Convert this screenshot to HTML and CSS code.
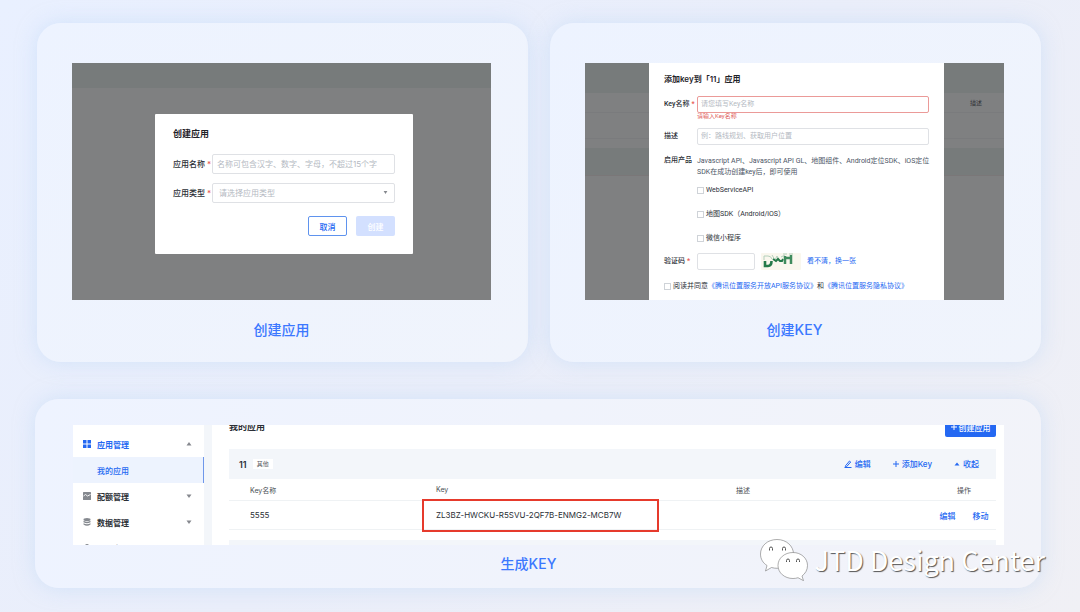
FILE: index.html
```html
<!DOCTYPE html>
<html lang="zh-CN">
<head>
<meta charset="utf-8">
<title>创建应用与 KEY</title>
<link rel="stylesheet" href="styles.css">
</head>
<body>
<main class="page">
  <div class="top-row">
    <section class="card">
      <div class="shot app-shot">
        <div class="topbar"></div>
        <form class="dialog">
          <h3 class="dialog-title">创建应用</h3>
          <div class="field-row">
            <label class="label" for="app-name">应用名称<span class="req">*</span></label>
            <input class="field" id="app-name" type="text" placeholder="名称可包含汉字、数字、字母，不超过15个字">
          </div>
          <div class="field-row">
            <label class="label" for="app-type">应用类型<span class="req">*</span></label>
            <div class="select-wrap">
              <select class="field select" id="app-type"><option>请选择应用类型</option></select>
              <svg class="select-arrow" viewBox="0 0 6 4"><path d="M0.5 0h5L3 4z"/></svg>
            </div>
          </div>
          <div class="dialog-actions">
            <button class="btn btn-outline" type="button">取消</button>
            <button class="btn btn-disabled" type="button">创建</button>
          </div>
        </form>
      </div>
      <h2 class="caption">创建应用</h2>
    </section>

    <section class="card">
      <div class="shot key-shot">
        <div class="backdrop">
          <div class="bd-head"></div><div class="bd-row"></div><div class="bd-row bd-tall"></div><div class="bd-gap"></div><div class="bd-band"></div>
        </div>
        <form class="panel">
          <h3 class="panel-title">添加key到「11」应用</h3>
          <div class="key-row">
            <label for="key-name">Key名称<span class="req">*</span></label>
            <div class="key-control">
              <input class="input input-error" id="key-name" type="text" placeholder="请您填写Key名称">
              <span class="error">请输入Key名称</span>
            </div>
          </div>
          <div class="key-row key-desc">
            <label for="key-desc">描述</label>
            <input class="input" id="key-desc" type="text" placeholder="例：路线规划、获取用户位置">
          </div>
          <div class="key-row key-products">
            <span>启用产品</span>
            <div class="key-control">
              <p class="note">Javascript API、Javascript API GL、地图组件、Android定位SDK、iOS定位<br>SDK在成功创建key后，即可使用</p>
              <label class="check"><input type="checkbox">WebServiceAPI</label>
              <label class="check"><input type="checkbox">地图SDK（Android/iOS）</label>
              <label class="check"><input type="checkbox">微信小程序</label>
            </div>
          </div>
          <div class="key-row">
            <label for="captcha">验证码<span class="req">*</span></label>
            <div class="captcha-row">
              <input class="input captcha-input" id="captcha" type="text">
              <svg class="captcha" viewBox="0 0 40 17">
                <rect width="40" height="17" rx="1" fill="#faf7ee"/>
                <path d="M4 8v5h3q3.500 0 3.500-5" fill="none" stroke="#257a4a" stroke-width="2.600"/>
                <path d="M3 7V3h4q3 0 4 3M11 2l3 5 2-4 2 4M20 4l4-2" fill="none" stroke="#b4d0bc" stroke-width="1"/>
                <path d="M12 6l3 2 2-2 2 2 2 0 1-2" fill="none" stroke="#257a4a" stroke-width="2"/>
                <path d="M24 3v8M30 2v9M24 5h5" fill="none" stroke="#3f8b5e" stroke-width="2.500"/>
                <path d="M22 1h4M28 1h4" stroke="#b4d0bc"/>
              </svg>
              <a class="link" href="#">看不清，换一张</a>
            </div>
          </div>
          <div class="agree">
            <label class="check"><input type="checkbox">阅读并同意</label>
            <span><a class="link" href="#">《腾讯位置服务开放API服务协议》</a>和<a class="link" href="#">《腾讯位置服务隐私协议》</a></span>
          </div>
        </form>
        <div class="backdrop">
          <div class="bd-head"></div><div class="bd-row">描述</div><div class="bd-row bd-tall"></div><div class="bd-gap"></div><div class="bd-band"></div>
        </div>
      </div>
      <h2 class="caption">创建KEY</h2>
    </section>
  </div>

  <section class="card card-wide">
    <div class="shot console">
      <nav class="sidebar">
        <a class="nav nav-open" href="#">
          <svg class="nav-icon" viewBox="0 0 8 8"><path d="M0 0h3.500v3.500H0zM4.500 0H8v3.500H4.500zM0 4.500h3.500V8H0zM4.500 4.500H8V8H4.500z"/></svg>
          应用管理
          <svg class="nav-arrow" viewBox="0 0 6 4"><path d="M0.500 3.500h5L3 0z"/></svg>
        </a>
        <a class="nav nav-active" href="#">我的应用</a>
        <a class="nav" href="#">
          <svg class="nav-icon" viewBox="0 0 8 8"><rect width="8" height="8" rx="0.500"/><path d="M0.500 4l2-1.500 2 1.500 3-1.500" fill="none" stroke="#fff" stroke-width="0.900"/></svg>
          配额管理
          <svg class="nav-arrow" viewBox="0 0 6 4"><path d="M0.500 0.500h5L3 4z"/></svg>
        </a>
        <a class="nav" href="#">
          <svg class="nav-icon" viewBox="0 0 8 8"><ellipse cx="4" cy="1.500" rx="3.500" ry="1.500"/><path d="M0.500 2.800q3.500 2 7 0v1.500q-3.500 2-7 0zM0.500 5.300q3.500 2 7 0v1.200q-3.500 2.500-7 0z"/></svg>
          数据管理
          <svg class="nav-arrow" viewBox="0 0 6 4"><path d="M0.500 0.500h5L3 4z"/></svg>
        </a>
        <a class="nav" href="#">
          <svg class="nav-icon" viewBox="0 0 8 8"><circle cx="4" cy="2" r="2"/><path d="M0 8q0-4 4-4t4 4z"/></svg>
          个人中心
        </a>
      </nav>
      <div class="content">
        <header class="content-head">
          <h3 class="content-title">我的应用</h3>
          <button class="btn-primary" type="button"><svg class="plus" viewBox="0 0 6 6"><path d="M3 0v6M0 3h6"/></svg>创建应用</button>
        </header>
        <div class="app-bar">
          <strong class="app-id">11</strong><span class="tag">其他</span>
          <div class="app-actions">
            <button class="act" type="button"><svg class="pencil" viewBox="0 0 8 8"><path d="M1.500 5.800L5.500 1l1.200 1-4 4.600H1.300zM0.500 7.500h7"/></svg>编辑</button>
            <button class="act" type="button"><svg class="plus" viewBox="0 0 6 6"><path d="M3 0v6M0 3h6"/></svg>添加Key</button>
            <button class="act" type="button"><svg class="up" viewBox="0 0 6 4"><path d="M0.500 3.500h5L3 0.500z"/></svg>收起</button>
          </div>
        </div>
        <table class="keys">
          <colgroup><col class="c-name"><col class="c-key"><col><col class="c-ops"></colgroup>
          <thead><tr><th>Key名称</th><th>Key</th><th>描述</th><th class="ops">操作</th></tr></thead>
          <tbody><tr>
            <td>5555</td>
            <td class="key-cell">ZL3BZ-HWCKU-R5SVU-2QF7B-ENMG2-MCB7W<span class="highlight"></span></td>
            <td></td>
            <td class="ops"><div class="ops-links"><a class="link" href="#">编辑</a><a class="link" href="#">移动</a></div></td>
          </tr></tbody>
        </table>
        <div class="app-bar next-bar"></div>
      </div>
    </div>
    <h2 class="caption">生成KEY</h2>
  </section>

  <div class="watermark">
    <svg class="wechat" viewBox="0 0 48 42">
      <g fill="#fff" stroke="#777" stroke-width="0.600">
        <path d="M17 0.500C7.500 0.500 0.500 7 0.500 15c0 5 2.500 9 6.500 11.500L5.500 32l6-3.500c2 .6 4 .8 6 .8 9 0 16-6.500 16-14.300S26.500.5 17 .5z"/>
        <path d="M33 13.500c-8.500 0-15 5.700-15 13s6.500 13 15 13c2 0 3.500-.3 5-.8l5.500 3-1.500-4.700c3.300-2.500 5.500-6 5.500-10.500 0-7.300-6.500-13-14.500-13z"/>
      </g>
      <g fill="none" stroke="#555" stroke-width="1">
        <path d="M9.500 11.500v-2q0-1.500 1.500-1.500t1.500 1.500v2M22.500 11.500v-2q0-1.500 1.500-1.500t1.500 1.500v2M26.500 23v-1.500q0-1.500 1.500-1.500t1.500 1.500V23M36.500 23v-1.500q0-1.500 1.500-1.500t1.500 1.500V23"/>
      </g>
    </svg>
    <span>JTD Design Center</span>
  </div>
</main>
</body>
</html>
```
FILE: styles.css
```css
* { box-sizing: border-box; margin: 0; }
body {
  font-family: Inter, "Noto Sans CJK SC", sans-serif;
  font-size: 8px;
  color: #2b2f36;
  background: linear-gradient(135deg, #e9f0ff 0%, #eaeefa 50%, #f0f0f5 100%);
}
input, select, button { font: inherit; color: inherit; min-width: 0; }
button { cursor: pointer; padding: 0; }
a { text-decoration: none; color: inherit; }
.link { color: #2468f2; }

.page { position: relative; min-height: 100vh; padding: 23px 39px 24px 35px; }
.top-row { display: grid; grid-template-columns: 1fr 1fr; gap: 22px; padding-left: 2px; }
.card {
  padding: 40px 37px 20px 35px;
  border-radius: 24px;
  background: linear-gradient(135deg, #edf3ff, #f0f4fc);
  box-shadow: 0 0 20px rgba(185, 214, 248, 0.5);
}
.card-wide {
  margin-top: 37px;
  padding: 26px 37px 12px 38px;
  background: linear-gradient(100deg, #eef3ff, #f2f3f9);
}
.card-wide .caption { margin-top: 7px; padding-right: 20px; }
.caption { margin-top: 18px; font-size: 14px; line-height: 24px; font-weight: 500; text-align: center; color: #3b78ff; }
.shot { overflow: hidden; }
.req { color: #e8554e; padding-left: 2px; }

/* create-app dialog */
.app-shot { height: 237px; background: #7f8081; }
.topbar { height: 25px; background: #777b7b; }
.dialog {
  margin: 26px 78px 0 83px;
  padding: 14px 18px 18px;
  border-radius: 1px;
  background: #fff;
}
.dialog-title { font-size: 9px; line-height: 12px; margin-bottom: 14px; font-weight: 600; color: #1f2329; }
.field-row { display: flex; align-items: center; margin-bottom: 9px; }
.label { width: 39px; flex: none; line-height: 12px; font-weight: 500; white-space: nowrap; }
.field {
  flex: 1; width: 100%; height: 20px; padding: 0 4px;
  border: 1px solid #dfe1e5; border-radius: 2px; background: #fff; outline: none;
}
.field::placeholder, .input::placeholder { color: #b4b9c2; opacity: 1; }
.select-wrap { position: relative; flex: 1; display: flex; }
.select { appearance: none; color: #b4b9c2; padding-left: 6px; }
.select-arrow { position: absolute; right: 7px; top: 8px; width: 5px; height: 3px; fill: #85888e; }
.dialog-actions { display: flex; justify-content: flex-end; gap: 9px; margin-top: 13px; }
.btn { width: 39px; height: 20px; border-radius: 2px; font-weight: 500; }
.btn-outline { border: 1px solid #5f93ee; background: #fff; color: #2468f2; }
.btn-disabled { border: 0; background: #d3e0ff; color: #fff; }

/* add-key panel */
.key-shot {
  height: 237px;
  display: grid; grid-template-columns: 64px 1fr 60px;
  font-family: Roboto, "Noto Sans CJK SC", sans-serif;
  font-size: 7px;
}
.backdrop { background: #7f8081; font-size: 6px; color: #33363a; }
.bd-head { height: 30px; background: #777b7b; }
.bd-row { height: 20px; line-height: 20px; border-bottom: 1px solid #7a7b7d; padding-left: 26px; }
.bd-tall { height: 26px; }
.bd-gap { height: 9px; }
.bd-band { height: 28px; background: #777b7b; border-bottom: 1px solid #7a7778; }
.panel { padding: 10px 15px 0 15px; background: #fff; white-space: nowrap; overflow: hidden; }
.panel-title { font-family: Inter, "Noto Sans CJK SC", sans-serif; font-size: 8px; line-height: 12px; font-weight: 600; color: #1f2329; margin-bottom: 11px; }
.key-row { display: grid; grid-template-columns: 33px 1fr; line-height: 17px; font-weight: 500; }
.key-control { display: flex; flex-direction: column; min-width: 0; }
.input { width: 100%; height: 17px; padding: 0 3px; border: 1px solid #dfe1e5; border-radius: 2px; background: #fff; outline: none; font-weight: 400; }
.input-error { border-color: #eb9a98; }
.error { font-size: 6px; line-height: 6px; color: #e0605c; font-weight: 400; }
.key-desc { margin-top: 9px; }
.key-products { margin-top: 7px; }
.note { padding-top: 4px; line-height: 11px; font-weight: 400; color: #4c5566; margin-bottom: 6px; }
.check { display: flex; align-items: center; gap: 2px; line-height: 12px; margin-bottom: 12px; }
.key-products .check { font-weight: 400; }
.check input { appearance: none; flex: none; width: 7px; height: 7px; margin: 0; border: 1px solid #cfd3d8; background: #fff; }
.key-products .check:last-child { margin-bottom: 9px; }
.captcha-row { display: flex; align-items: center; gap: 6px; }
.captcha-input { width: 58px; }
.captcha { width: 40px; height: 17px; }
.captcha-row .link { font-weight: 400; }
.agree { display: flex; align-items: center; margin-top: 10px; line-height: 12px; font-weight: 400; }
.agree .check { margin: 0; }

/* console */
.console { height: 120px; display: grid; grid-template-columns: 131px 1fr; gap: 8px; background: #f3f6fa; }
.sidebar { padding-top: 6px; background: #fff; }
.nav { display: flex; align-items: center; gap: 6px; height: 26px; padding: 0 12px 0 10px; font-weight: 600; }
.nav-icon { width: 8px; height: 8px; fill: #85898f; }
.nav-arrow { width: 6px; height: 4px; margin-left: auto; fill: #85888e; }
.nav-open { color: #2468f2; }
.nav-open .nav-icon { fill: #2468f2; }
.nav-active { padding-left: 24px; color: #2468f2; font-weight: 500; background: #edf3fe; border-right: 1px solid #6f97ea; }
.content { padding: 0 8px 0 17px; background: #fff; }
.content-head { display: flex; justify-content: space-between; align-items: center; height: 20px; margin: -8px 0 12px; }
.content-title { font-size: 9px; line-height: 20px; font-weight: 600; }
.btn-primary { display: flex; align-items: center; justify-content: center; gap: 2px; width: 51px; height: 20px; border: 0; border-radius: 2px; background: #2468f2; color: #fff; font-weight: 500; }
.plus { width: 6px; height: 6px; fill: none; stroke: currentColor; stroke-width: 1; }
.app-bar { display: flex; align-items: center; height: 30px; padding: 0 17px 0 10px; background: #f3f6fa; }
.app-id { font-size: 9px; font-weight: 600; }
.tag { margin-left: 6px; padding: 0 4px; font-size: 6px; line-height: 10px; background: #fff; color: #5c6066; }
.app-actions { display: flex; gap: 22px; margin-left: auto; }
.act { display: flex; align-items: center; gap: 3px; border: 0; background: none; color: #2468f2; font-weight: 500; font-size: 8px; line-height: 12px; }
.pencil { width: 8px; height: 8px; fill: none; stroke: currentColor; stroke-width: 1; }
.up { width: 6px; height: 4px; fill: currentColor; }
.keys { width: 100%; table-layout: fixed; border-collapse: separate; border-spacing: 0; }
.keys th, .keys td { padding: 0 0 0 21px; text-align: left; border-bottom: 1px solid #eff2f4; font-weight: 400; }
.keys th { height: 22px; font-size: 7px; color: #4c4f55; }
.keys td { height: 29px; font-size: 8px; }
.keys .ops { padding: 0; text-align: center; }
.c-name { width: 186px; }
.c-key { width: 300px; }
.c-ops { width: 64px; }
.ops-links { display: flex; justify-content: center; gap: 17px; font-weight: 500; }
.key-cell { position: relative; }
.highlight { position: absolute; left: 7px; top: -2px; width: 237px; height: 33px; border: 2px solid #e63a2c; }
.next-bar { margin-top: 10px; }

.watermark {
  position: absolute; right: 35px; bottom: 31px;
  display: flex; align-items: center; gap: 7px;
  font: 400 27px/40px "Noto Sans CJK SC", sans-serif;
  color: #fff; text-shadow: 1px 1px 1px #555;
  white-space: nowrap;
}
.wechat { width: 48px; height: 42px; }
```
